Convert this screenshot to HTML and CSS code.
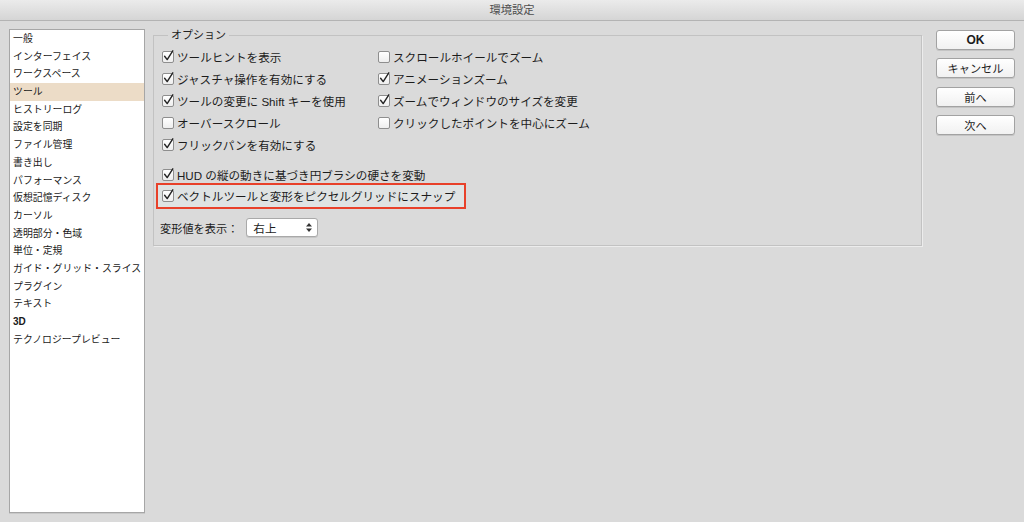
FILE: index.html
```html
<!DOCTYPE html>
<html lang="ja">
<head>
    <meta charset="UTF-8">
    <title>環境設定</title>
    <link rel="stylesheet" href="styles.css">
</head>
<body>
    <div class="window">
        <div class="titlebar">環境設定</div>

        <div class="content">
            <ul class="sidebar">
                <li>一般</li>
                <li>インターフェイス</li>
                <li>ワークスペース</li>
                <li class="selected">ツール</li>
                <li>ヒストリーログ</li>
                <li>設定を同期</li>
                <li>ファイル管理</li>
                <li>書き出し</li>
                <li>パフォーマンス</li>
                <li>仮想記憶ディスク</li>
                <li>カーソル</li>
                <li>透明部分・色域</li>
                <li>単位・定規</li>
                <li>ガイド・グリッド・スライス</li>
                <li>プラグイン</li>
                <li>テキスト</li>
                <li class="bold">3D</li>
                <li>テクノロジープレビュー</li>
            </ul>

            <div class="group">
                <span class="legend">オプション</span>

                <div class="options-grid">
                    <label class="check"><span class="box on"></span>ツールヒントを表示</label>
                    <label class="check"><span class="box"></span>スクロールホイールでズーム</label>
                    <label class="check"><span class="box on"></span>ジャスチャ操作を有効にする</label>
                    <label class="check"><span class="box on"></span>アニメーションズーム</label>
                    <label class="check"><span class="box on"></span>ツールの変更に Shift キーを使用</label>
                    <label class="check"><span class="box on"></span>ズームでウィンドウのサイズを変更</label>
                    <label class="check"><span class="box"></span>オーバースクロール</label>
                    <label class="check"><span class="box"></span>クリックしたポイントを中心にズーム</label>
                    <label class="check"><span class="box on"></span>フリックパンを有効にする</label>
                </div>

                <div class="extra">
                    <label class="check"><span class="box on"></span>HUD の縦の動きに基づき円ブラシの硬さを変動</label>
                    <label class="check highlight"><span class="box on"></span>ベクトルツールと変形をピクセルグリッドにスナップ</label>
                </div>

                <div class="display-row">
                    <span class="display-label">変形値を表示：</span>
                    <div class="select">
                        <span>右上</span>
                        <svg class="arrows" width="6" height="9" viewBox="0 0 6 9">
                            <path d="M3 0 L6 3.5 L0 3.5 Z M3 9 L6 5.5 L0 5.5 Z" fill="#333"/>
                        </svg>
                    </div>
                </div>
            </div>

            <div class="buttons">
                <button class="btn default">OK</button>
                <button class="btn">キャンセル</button>
                <button class="btn">前へ</button>
                <button class="btn">次へ</button>
            </div>
        </div>
    </div>

    <script>
        // draw the tick into every checked box
        const tick = '<svg width="13" height="13" viewBox="0 0 13 13"><path d="M2.6 6.2 L5.2 9.6 L10.8 0.8" fill="none" stroke="#222" stroke-width="1.4" stroke-linecap="round" stroke-linejoin="round"/></svg>';
        document.querySelectorAll('.box.on').forEach(box => {
            box.innerHTML = tick;
        });
    </script>
</body>
</html>
```

FILE: styles.css
```css
* {
    margin: 0;
    padding: 0;
    box-sizing: border-box;
}

body {
    background-color: #dadada;
    font-family: 'Liberation Sans', 'Noto Sans CJK JP', sans-serif;
    color: #1c1c1c;
    overflow: hidden;
}

.window {
    height: 522px;
    border-radius: 0 0 5px 5px;
    background-color: #dadada;
}

.titlebar {
    height: 21px;
    line-height: 20px;
    text-align: center;
    font-size: 11.3px;
    color: #4d4d4d;
    background: linear-gradient(#ebebeb, #d5d5d5);
    border-bottom: 1px solid #b3b3b3;
}

.content {
    display: flex;
    align-items: flex-start;
    padding: 8px 9px 0 9px;
}

/* left category list */
.sidebar {
    list-style: none;
    width: 136px;
    height: 484px;
    background-color: #fff;
    border: 1px solid #a6a6a6;
    box-shadow: 0 1px 0 #c8c8c8;
    flex-shrink: 0;
}

.sidebar li {
    height: 17.7px;
    line-height: 17.7px;
    padding-left: 3px;
    font-size: 9.9px;
    color: #1a1a1a;
    white-space: nowrap;
}

.sidebar li.selected {
    background-color: #ecdcc7;
}

.sidebar li.bold {
    font-weight: bold;
    font-size: 10px;
}

/* options group */
.group {
    position: relative;
    width: 769px;
    margin-left: 8px;
    margin-top: 6px;
    padding: 10px 8px 8px 8px;
    border: 1px solid #c2c2c2;
    box-shadow: 1px 1px 0 #ececec;
    flex-shrink: 0;
}

.legend {
    position: absolute;
    top: -9px;
    left: 14px;
    padding: 0 3px;
    background-color: #dadada;
    font-size: 11px;
    line-height: 16px;
    color: #222;
}

.options-grid {
    display: grid;
    grid-template-columns: 216px 1fr;
    grid-auto-rows: 22px;
}

.check {
    display: flex;
    align-items: center;
    height: 22px;
    font-size: 11.6px;
    white-space: nowrap;
}

.box {
    position: relative;
    width: 12px;
    height: 12px;
    margin-right: 3px;
    border: 1px solid #8e8e8e;
    border-radius: 2px;
    background: linear-gradient(#ffffff, #eeeeee);
    flex-shrink: 0;
}

.box svg {
    position: absolute;
    top: -2px;
    left: -1px;
    overflow: visible;
}

.extra {
    margin-top: 8px;
}

.extra .highlight {
    width: 310px;
    height: 26px;
    margin-top: -3px;
    margin-left: -6px;
    padding-left: 4px;
    border: 2px solid #e8412a;
    background-color: #dfe3e3;
}

.display-row {
    display: flex;
    align-items: center;
    margin-top: 9px;
    margin-left: -2px;
}

.display-label {
    font-size: 11.2px;
    margin-right: 8px;
}

.select {
    display: flex;
    align-items: center;
    justify-content: space-between;
    width: 72px;
    height: 19px;
    padding: 0 5px 0 6px;
    background-color: #fff;
    border: 1px solid #a9a9a9;
    border-radius: 3px;
    box-shadow: 0 1px 0 #c6c6c6;
    font-size: 11.6px;
}

/* dialog buttons */
.buttons {
    display: flex;
    flex-direction: column;
    gap: 8.4px;
    margin-left: 14px;
    margin-top: 1px;
}

.btn {
    width: 79px;
    height: 20px;
    background: linear-gradient(#ffffff, #f1f1f1);
    border: 1px solid #a2a2a2;
    border-radius: 3px;
    box-shadow: 0 1px 0 #c4c4c4;
    font-family: 'Liberation Sans', 'Noto Sans CJK JP', sans-serif;
    font-size: 11.2px;
    color: #1c1c1c;
}

.btn.default {
    font-weight: bold;
    font-size: 12px;
}
```
